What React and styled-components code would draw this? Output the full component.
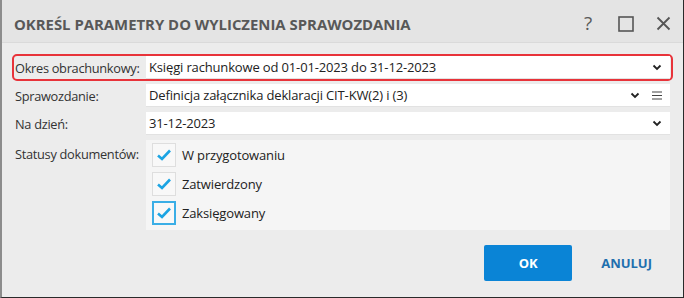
import React from "react";
import styled, { createGlobalStyle } from "styled-components";

const Global = createGlobalStyle`
  html, body { margin: 0; padding: 0; background: #ececec; }
  body { font-family: "Open Sans", "Noto Sans", sans-serif; }
`;

const Window = styled.div`
  width: 684px;
  height: 298px;
  box-sizing: border-box;
  background: #ececec;
  border-left: 2px solid #8c8c8c;
  border-right: 1px solid #2a2a2a;
  border-bottom: 1px solid #2a2a2a;
  display: flex;
  flex-direction: column;
`;

const TitleBar = styled.div`
  height: 43px;
  flex: none;
  display: flex;
  align-items: center;
  padding: 5px 12px 0 12px;
  background: #e4e4e4;
  border-bottom: 1px solid #dadada;
  box-sizing: border-box;
`;

const Title = styled.h1`
  margin: 0;
  flex: 1;
  font-size: 14.9px;
  font-weight: 700;
  color: #585858;
  white-space: nowrap;
`;

const TitleIcons = styled.div`
  display: flex;
  align-items: center;
  gap: 22px;
  color: #5a5a5a;
`;

const Help = styled.span`
  font-size: 19px;
  font-weight: 400;
  line-height: 1;
  width: 12px;
`;

const Body = styled.div`
  flex: 1;
  display: flex;
  flex-direction: column;
  gap: 1px;
  padding: 11px 10px 0 10px;
`;

const Row = styled.div`
  display: grid;
  grid-template-columns: 131px 1fr;
  align-items: ${p => (p.$top ? "start" : "center")};
  border: 2px solid ${p => (p.$highlight ? "#e8333a" : "transparent")};
  border-radius: 5px;
  padding: 0 1px;
`;

const Label = styled.div`
  font-size: 12.8px;
  letter-spacing: -0.3px;
  white-space: nowrap;
  color: #333;
  padding-top: ${p => p.$pad || 0}px;
`;

const Field = styled.div`
  height: 23px;
  background: #fff;
  display: flex;
  align-items: center;
  padding: 0 8px 0 3px;
  border-bottom: 1px solid #e2e2e2;
  box-sizing: border-box;
  font-size: 13px;
  letter-spacing: -0.15px;
  color: #222;
  gap: 12px;
`;

const FieldText = styled.span`
  flex: 1;
  white-space: nowrap;
`;

const Panel = styled.div`
  background: #f5f5f5;
  height: 90px;
  padding: 3px 6px;
  box-sizing: border-box;
  display: flex;
  flex-direction: column;
  gap: 5px;
`;

const Check = styled.label`
  display: flex;
  align-items: center;
  gap: 6px;
  font-size: 13px;
  letter-spacing: -0.15px;
  color: #222;
`;

const Box = styled.span`
  width: 24px;
  height: 24px;
  box-sizing: border-box;
  border: ${p => (p.$focus ? "2px solid #3aaee6" : "1px solid #dedede")};
  background: #f8f8f8;
  display: flex;
  align-items: center;
  justify-content: center;
`;

const Footer = styled.div`
  display: flex;
  justify-content: flex-end;
  align-items: center;
  gap: 29px;
  padding: 0 31px 16px 0;
  margin-top: auto;
`;

const OkButton = styled.button`
  width: 88px;
  height: 36px;
  border: none;
  border-radius: 2px;
  background: #0a84d6;
  color: #fff;
  font-family: inherit;
  font-size: 13px;
  font-weight: 700;
`;

const CancelButton = styled.button`
  border: none;
  background: none;
  padding: 0;
  color: #1f6fae;
  font-family: inherit;
  font-size: 13px;
  font-weight: 700;
`;

const Chevron = () => (
  <svg width="10" height="7" viewBox="0 0 10 7">
    <path d="M1.5 1.5 L5 5 L8.5 1.5" fill="none" stroke="#222" strokeWidth="1.8" />
  </svg>
);

const Menu = () => (
  <svg width="10" height="9" viewBox="0 0 10 9">
    <path d="M0 1 H10 M0 4.5 H10 M0 8 H10" stroke="#444" strokeWidth="1.2" />
  </svg>
);

const Tick = () => (
  <svg width="16" height="14" viewBox="0 0 16 14">
    <path d="M2 7.5 L6 11 L14 2.5" fill="none" stroke="#1ba4e3" strokeWidth="2.6" />
  </svg>
);

const statuses = [
  { name: "W przygotowaniu" },
  { name: "Zatwierdzony" },
  { name: "Zaksięgowany", focus: true },
];

export default function App() {
  return (
    <>
      <Global />
      <Window>
        <TitleBar>
          <Title>OKREŚL PARAMETRY DO WYLICZENIA SPRAWOZDANIA</Title>
          <TitleIcons>
            <Help>?</Help>
            <svg width="16" height="16" viewBox="0 0 16 16">
              <rect x="1" y="1" width="14" height="14" fill="none" stroke="#555" strokeWidth="1.6" />
            </svg>
            <svg width="15" height="15" viewBox="0 0 15 15">
              <path d="M1.5 1.5 L13.5 13.5 M13.5 1.5 L1.5 13.5" stroke="#555" strokeWidth="1.8" />
            </svg>
          </TitleIcons>
        </TitleBar>
        <Body>
          <Row $highlight>
            <Label>Okres obrachunkowy:</Label>
            <Field>
              <FieldText>Księgi rachunkowe od 01-01-2023 do 31-12-2023</FieldText>
              <Chevron />
            </Field>
          </Row>
          <Row>
            <Label>Sprawozdanie:</Label>
            <Field>
              <FieldText>Definicja załącznika deklaracji CIT-KW(2) i (3)</FieldText>
              <Chevron />
              <Menu />
            </Field>
          </Row>
          <Row>
            <Label>Na dzień:</Label>
            <Field>
              <FieldText>31-12-2023</FieldText>
              <Chevron />
            </Field>
          </Row>
          <Row $top>
            <Label $pad={5}>Statusy dokumentów:</Label>
            <Panel>
              {statuses.map(s => (
                <Check key={s.name}>
                  <Box $focus={s.focus}>
                    <Tick />
                  </Box>
                  {s.name}
                </Check>
              ))}
            </Panel>
          </Row>
        </Body>
        <Footer>
          <OkButton>OK</OkButton>
          <CancelButton>ANULUJ</CancelButton>
        </Footer>
      </Window>
    </>
  );
}
